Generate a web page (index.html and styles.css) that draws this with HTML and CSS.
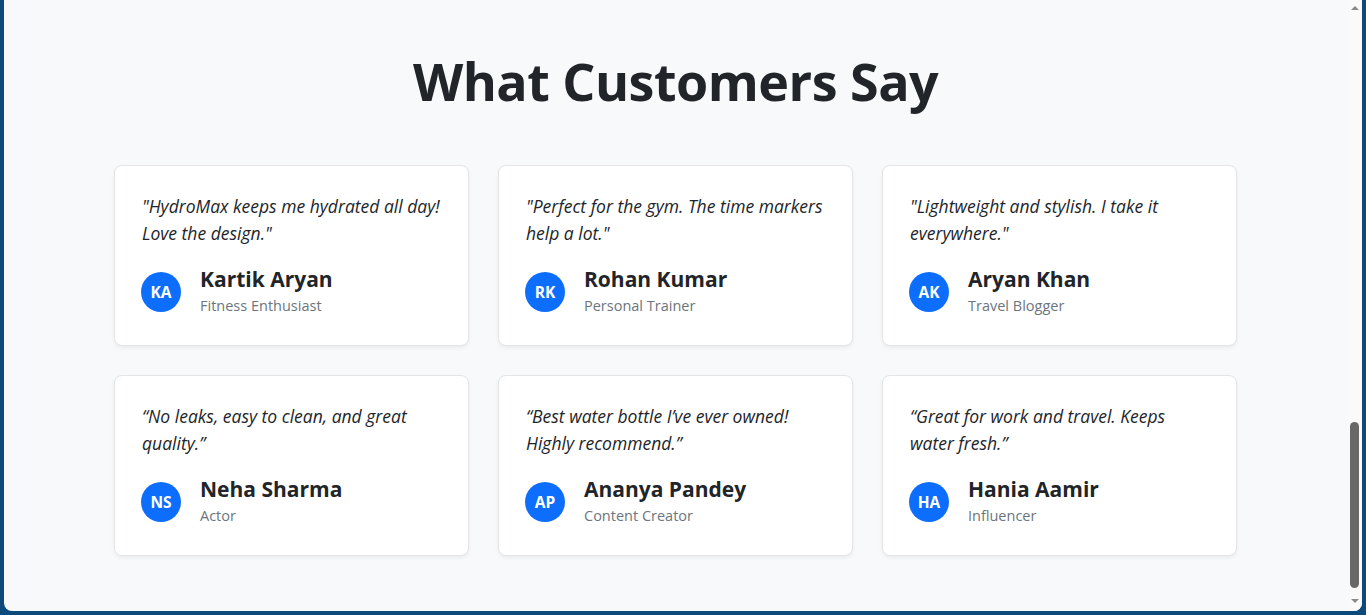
FILE: index.html
```html
<!DOCTYPE html>
<html lang="en">
<head>
<meta charset="utf-8">
<title>What Customers Say</title>
<link rel="stylesheet" href="styles.css">
</head>
<body>
<div class="window">
  <main class="page">
    <section class="testimonials">
      <h2 class="title">What Customers Say</h2>
      <div class="grid">
        <article class="card">
          <p class="quote">"HydroMax keeps me hydrated all day! Love the design."</p>
          <div class="author">
            <div class="avatar">KA</div>
            <div class="who">
              <div class="name">Kartik Aryan</div>
              <div class="role">Fitness Enthusiast</div>
            </div>
          </div>
        </article>
        <article class="card">
          <p class="quote">"Perfect for the gym. The time markers help a lot."</p>
          <div class="author">
            <div class="avatar">RK</div>
            <div class="who">
              <div class="name">Rohan Kumar</div>
              <div class="role">Personal Trainer</div>
            </div>
          </div>
        </article>
        <article class="card">
          <p class="quote">"Lightweight and stylish. I take it everywhere."</p>
          <div class="author">
            <div class="avatar">AK</div>
            <div class="who">
              <div class="name">Aryan Khan</div>
              <div class="role">Travel Blogger</div>
            </div>
          </div>
        </article>
        <article class="card">
          <p class="quote">“No leaks, easy to clean, and great quality.”</p>
          <div class="author">
            <div class="avatar">NS</div>
            <div class="who">
              <div class="name">Neha Sharma</div>
              <div class="role">Actor</div>
            </div>
          </div>
        </article>
        <article class="card">
          <p class="quote">“Best water bottle I’ve ever owned! Highly recommend.”</p>
          <div class="author">
            <div class="avatar">AP</div>
            <div class="who">
              <div class="name">Ananya Pandey</div>
              <div class="role">Content Creator</div>
            </div>
          </div>
        </article>
        <article class="card">
          <p class="quote">“Great for work and travel. Keeps water fresh.”</p>
          <div class="author">
            <div class="avatar">HA</div>
            <div class="who">
              <div class="name">Hania Aamir</div>
              <div class="role">Influencer</div>
            </div>
          </div>
        </article>
      </div>
    </section>
  </main>
  <div class="scrollbar">
    <div class="arrow up"></div>
    <div class="track"><div class="thumb"></div></div>
    <div class="arrow down"></div>
  </div>
</div>
</body>
</html>
```

FILE: styles.css
```css
* { box-sizing: border-box; }
html, body { margin: 0; padding: 0; }
body {
  background: #0b4a7a;
  height: 615px;
  overflow: hidden;
  font-family: "Open Sans", "Noto Sans", sans-serif;
}
.window {
  margin: 0 4px 4px 4px;
  height: 611px;
  background: #f8f9fa;
  border-radius: 0 0 8px 8px;
  display: flex;
  overflow: hidden;
}
.page {
  flex: 1;
  min-width: 0;
}
.testimonials {
  padding-top: 50px;
}
.title {
  margin: 0 0 53px;
  text-align: center;
  font-size: 52px;
  line-height: 1.2;
  font-weight: 700;
  color: #212529;
  letter-spacing: -0.5px;
}
.grid {
  display: grid;
  grid-template-columns: repeat(3, 355px);
  gap: 29px;
  justify-content: center;
}
.card {
  background: #fff;
  border: 1px solid #e3e5e8;
  border-radius: 8px;
  box-shadow: 0 2px 4px rgba(0,0,0,0.06);
  padding: 27px 27px 27px 26px;
  height: 181px;
}
.quote {
  margin: 0 0 18px 1px;
  font-style: italic;
  font-size: 17.5px;
  line-height: 27px;
  color: #212529;
}
.author {
  display: flex;
  align-items: center;
  gap: 19px;
}
.avatar {
  width: 40px;
  height: 40px;
  border-radius: 50%;
  background: #0d6efd;
  color: #fff;
  font-weight: 700;
  font-size: 15.5px;
  display: flex;
  align-items: center;
  justify-content: center;
  flex: none;
}
.name {
  font-size: 21px;
  font-weight: 700;
  line-height: 28px;
  color: #212529;
}
.role {
  font-size: 14.5px;
  line-height: 25px;
  color: #6c757d;
}
.scrollbar {
  width: 15px;
  flex: none;
  background: #fafafa;
  display: flex;
  flex-direction: column;
  align-items: center;
}
.arrow {
  width: 0;
  height: 0;
  border-left: 4px solid transparent;
  border-right: 4px solid transparent;
}
.arrow.up {
  margin-top: 6px;
  border-bottom: 4px solid #8a8a8a;
}
.arrow.down {
  margin-bottom: 8px;
  border-top: 4px solid #8a8a8a;
}
.track {
  flex: 1;
  width: 100%;
  display: flex;
  flex-direction: column;
  justify-content: flex-end;
  align-items: center;
  padding-bottom: 11px;
}
.thumb {
  width: 9px;
  height: 166px;
  border-radius: 5px;
  background: #686868;
}
```
